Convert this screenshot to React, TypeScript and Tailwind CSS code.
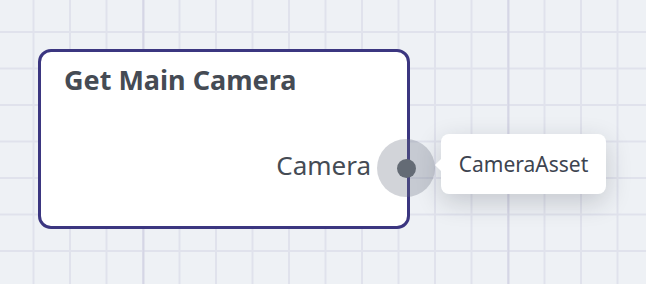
const gridBg =
  "bg-[#eef1f5] bg-[linear-gradient(to_right,#d5d6e5_2px,transparent_2px),linear-gradient(to_right,#e0e2ec_1.5px,transparent_1.5px),linear-gradient(to_bottom,#e0e2ec_1.5px,transparent_1.5px)] bg-[size:365px_100%,36.5px_36.5px,36.5px_36.5px] bg-[position:142.5px_0px,32.5px_0px,0px_31px]";

const Port = () => {
  return (
    <div className="absolute left-[377px] top-[139px] flex h-[58px] w-[58px] items-center justify-center rounded-full bg-[rgba(107,114,128,0.3)]">
      <div className="h-[19px] w-[19px] rounded-full bg-[#646b75]" />
    </div>
  );
};

const Tooltip = ({ label }: { label: string }) => {
  return (
    <div className="absolute left-[441px] top-[134px] flex h-[60px] w-[165px] items-center justify-center rounded-lg bg-white shadow-[0_8px_26px_rgba(30,35,50,0.2)]">
      <div className="absolute left-[-4px] top-[26px] h-[10px] w-[10px] rotate-45 bg-white" />
      <span className="relative text-[21px] leading-none text-[#3d4450]">
        {label}
      </span>
    </div>
  );
};

const App = () => {
  return (
    <div
      className={`relative h-[284px] w-[646px] overflow-hidden ${gridBg}`}
      style={{ fontFamily: '"Noto Sans", "Open Sans", sans-serif' }}
    >
      <div className="absolute left-[38px] top-[49px] flex h-[180px] w-[372px] flex-col rounded-[13px] border-[3px] border-[#3b3680] bg-white">
        <h3 className="pl-[23px] pt-[12px] text-[27px] font-bold leading-[32px] text-[#454b54]">
          Get Main Camera
        </h3>
        <div className="mt-[53px] flex justify-end pr-[36px]">
          <span className="text-[26px] leading-[32px] text-[#454b54]">
            Camera
          </span>
        </div>
      </div>
      <Port />
      <Tooltip label="CameraAsset" />
    </div>
  );
};

export default App;
